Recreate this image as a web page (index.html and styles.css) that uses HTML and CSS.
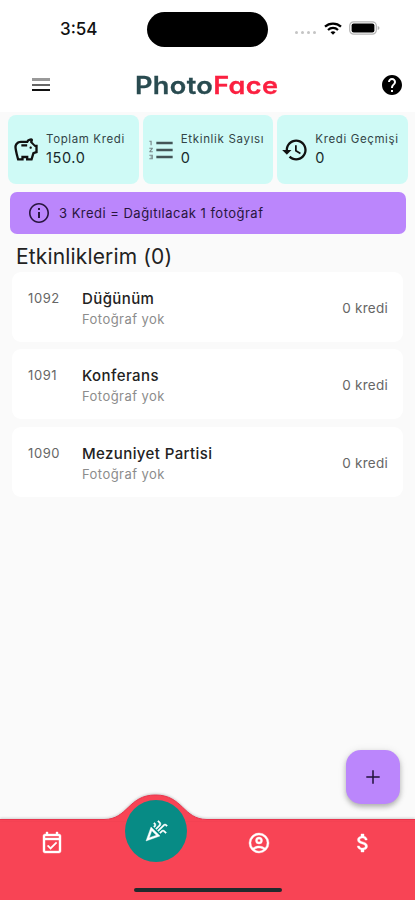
FILE: index.html
```html
<!DOCTYPE html>
<html lang="tr">
<head>
<meta charset="utf-8">
<meta name="viewport" content="width=device-width, initial-scale=1">
<title>PhotoFace</title>
<link rel="stylesheet" href="styles.css">
</head>
<body>
<div class="screen">
  <header class="top">
    <div class="status">
      <span class="time">3:54</span>
      <span class="island"></span>
      <div class="signals">
        <span class="dots"><i></i><i></i><i></i><i></i></span>
        <svg class="wifi" width="18" height="13" viewBox="0 0 18 13" fill="none" stroke="#000" stroke-width="2.2"><path d="M1 4.6C5.4.5 12.600.5 17 4.600"/><path d="M4 8C6.900 5.200 11.100 5.200 14 8"/><path d="M9 12.700 6.500 10.200Q9 8.200 11.500 10.200Z" fill="#000" stroke="none"/></svg>
        <svg width="31" height="14" viewBox="0 0 31 14"><rect x=".7" y=".8" width="26.600" height="12.400" rx="4" fill="#fff" stroke="#b4b4b4" stroke-width="1.200"/><rect x="2.600" y="2.500" width="22.800" height="9" rx="2" fill="#000"/><path d="M28.700 5v4q1.800-.7 1.800-2t-1.800-2Z" fill="#b4b4b4"/></svg>
      </div>
    </div>
    <div class="appbar">
      <span class="menu"><i></i><i></i><i></i></span>
      <h1 class="logo">Photo<b>Face</b></h1>
      <svg class="help" viewBox="2 2 20 20"><path d="M12 2C6.480 2 2 6.480 2 12s4.480 10 10 10 10-4.480 10-10S17.520 2 12 2zm1 17h-2v-2h2v2zm2.070-7.750-.9.920C13.450 12.900 13 13.500 13 15h-2v-.5c0-1.100.45-2.100 1.170-2.830l1.240-1.260c.37-.36.590-.86.590-1.410 0-1.100-.9-2-2-2s-2 .9-2 2H8c0-2.210 1.790-4 4-4s4 1.790 4 4c0 .88-.36 1.680-.93 2.250z"/></svg>
    </div>
  </header>

  <section class="stats">
    <div class="stat">
      <svg class="ic" viewBox="0 0 24 24"><path d="M15 10c0-.55.45-1 1-1s1 .45 1 1-.45 1-1 1-1-.45-1-1zM8 9h5V7H8v2zm14-1.500v6.970l-2.820.94L17.500 21H12v-2h-2v2H4.500S2 12.540 2 9.500C2 6.460 4.460 4 7.500 4h5c.91-1.210 2.360-2 4-2 .83 0 1.500.67 1.500 1.500 0 .21-.04.41-.12.590-.14.340-.26.730-.32 1.150l2.270 2.260H22zm-2 2h-.5L15.500 5.500c0-.46.060-.92.170-1.370C14.770 4.460 14.010 5.150 13.700 6H7.500C5.570 6 4 7.570 4 9.500c0 1.880 1.220 6.650 2.010 9.500H8v-2h6v2h2.010l1.550-5.150L20 13.030V9.500z"/></svg>
      <div><p class="label l1">Toplam Kredi</p><p class="value">150.0</p></div>
    </div>
    <div class="stat">
      <svg class="ic soft" viewBox="0 0 24 24"><path d="M8 5h14v2H8zM8 11h14v2H8zM8 17h14v2H8z"/><path class="num" d="M2 4h2v4H3V5H2zM2 10h3v.9L3.200 13H5v1H2v-.9L3.800 11H2zM2 16h3v4H2v-1h2v-.5H3v-1h1V17H2z"/></svg>
      <div><p class="label">Etkinlik Sayısı</p><p class="value">0</p></div>
    </div>
    <div class="stat">
      <svg class="ic" viewBox="0 0 24 24"><path d="M13 3c-4.970 0-9 4.030-9 9H1l3.890 3.890.07.14L9 12H6c0-3.870 3.130-7 7-7s7 3.130 7 7-3.130 7-7 7c-1.930 0-3.680-.79-4.940-2.060l-1.420 1.420C8.270 19.990 10.510 21 13 21c4.970 0 9-4.030 9-9s-4.030-9-9-9zm-1 5v5l4.280 2.540.72-1.210-3.500-2.080V8H12z"/></svg>
      <div><p class="label l1">Kredi Geçmişi</p><p class="value">0</p></div>
    </div>
  </section>

  <div class="notice">
    <svg viewBox="2 2 20 20"><path d="M11 7h2v2h-2zm0 4h2v6h-2zm1-9C6.480 2 2 6.480 2 12s4.480 10 10 10 10-4.480 10-10S17.520 2 12 2zm0 18.400c-4.630 0-8.400-3.770-8.400-8.400S7.370 3.600 12 3.600s8.400 3.770 8.400 8.400-3.770 8.400-8.400 8.400z"/></svg>
    <span>3 Kredi = Dağıtılacak 1 fotoğraf</span>
  </div>

  <h2 class="heading">Etkinliklerim (0)</h2>
  <ul class="events">
    <li><span class="id">1092</span><div class="info"><p class="name">Düğünüm</p><p class="sub">Fotoğraf yok</p></div><span class="credit">0 kredi</span></li>
    <li><span class="id">1091</span><div class="info"><p class="name">Konferans</p><p class="sub">Fotoğraf yok</p></div><span class="credit">0 kredi</span></li>
    <li><span class="id">1090</span><div class="info"><p class="name">Mezuniyet Partisi</p><p class="sub">Fotoğraf yok</p></div><span class="credit">0 kredi</span></li>
  </ul>

  <button class="fab" aria-label="Ekle"><svg width="14" height="14" viewBox="0 0 14 14" stroke="#21113a" stroke-width="1.500"><path d="M7 .3v13.400M.3 7h13.400"/></svg></button>

  <nav class="nav">
    <svg class="hump" width="415" height="28" viewBox="0 0 415 28"><path d="M0 26.500H104C128 26.500 128 2 155.500 2S183 26.500 207 26.500H415V28H0Z" fill="#f84455"/><path d="M0 26.500H104C128 26.500 128 2 155.500 2S183 26.500 207 26.500H415" fill="none" stroke="#e8334c" stroke-width="1"/></svg>
    <div class="tabs">
      <a class="tab"><svg width="24" height="24" viewBox="0 0 24 24"><path d="M19 3h-1V1h-2v2H8V1H6v2H5c-1.110 0-2 .9-2 2v15c0 1.100.89 2 2 2h14c1.100 0 2-.9 2-2V5c0-1.100-.9-2-2-2zm0 17H5V9h14v11zM5 7V5h14v2H5zm5.560 11.500 6.500-6.500-1.100-1.100-5.400 5.400-2.300-2.300-1.100 1.100z"/></svg></a>
      <a class="tab active"><span class="bubble"><svg width="24" height="24" viewBox="0 0 24 24"><path fill-rule="evenodd" d="m2 22 14-5L7 8 2 22zm3.300-3.300 2.520-7.050 4.530 4.530-7.050 2.520zM14.530 12.530l5.590-5.590c.49-.49 1.280-.49 1.770 0l.59.590 1.060-1.060-.59-.59c-1.070-1.070-2.820-1.070-3.890 0l-5.590 5.590 1.060 1.060zM10.060 6.880l-.59.590 1.060 1.060.59-.59c1.070-1.070 1.070-2.820 0-3.890l-.59-.59-1.060 1.070.59.590c.48.48.48 1.280 0 1.760zM17.060 11.880l-1.590 1.590 1.060 1.060 1.590-1.590c.49-.49 1.280-.49 1.770 0l1.610 1.610 1.060-1.060-1.610-1.610c-1.080-1.070-2.820-1.070-3.890 0zM15.060 5.880l-3.590 3.590 1.060 1.060 3.590-3.590c1.070-1.070 1.070-2.820 0-3.890l-1.590-1.590-1.060 1.060 1.590 1.590c.48.490.48 1.290 0 1.770z"/></svg></span></a>
      <a class="tab"><svg width="24" height="24" viewBox="0 0 24 24" fill-rule="evenodd"><path d="M12 2a10 10 0 1 0 0 20 10 10 0 0 0 0-20zM7.350 18.500C8.660 17.560 10.260 17 12 17s3.340.56 4.650 1.500a8 8 0 0 1-9.300 0zm10.790-1.380A9.950 9.950 0 0 0 12 15c-2.320 0-4.450.8-6.140 2.120a8 8 0 1 1 12.280 0z"/><path d="M12 6a3.500 3.500 0 1 0 0 7 3.500 3.500 0 0 0 0-7zm0 5a1.500 1.500 0 1 1 0-3 1.500 1.500 0 0 1 0 3z"/></svg></a>
      <a class="tab"><svg width="24" height="24" viewBox="0 0 24 24"><path d="M11.800 10.900c-2.270-.59-3-1.200-3-2.150 0-1.090 1.010-1.850 2.700-1.850 1.780 0 2.440.85 2.500 2.100h2.210c-.07-1.720-1.120-3.300-3.210-3.810V3h-3v2.160c-1.940.42-3.500 1.680-3.500 3.610 0 2.310 1.910 3.460 4.700 4.130 2.500.6 3 1.480 3 2.410 0 .69-.49 1.790-2.700 1.790-2.060 0-2.870-.92-2.980-2.100h-2.200c.12 2.190 1.760 3.420 3.680 3.830V21h3v-2.150c1.950-.37 3.500-1.500 3.500-3.550 0-2.840-2.430-3.810-4.700-4.400z"/></svg></a>
    </div>
    <span class="home"></span>
  </nav>
</div>
</body>
</html>
```
FILE: styles.css
```css
* { box-sizing: border-box; margin: 0; padding: 0; }
body { font-family: Inter, "Liberation Sans", sans-serif; background: #fafafa; color: #222; }
.screen { width: 415px; height: 900px; display: flex; flex-direction: column; position: relative; overflow: hidden; background: #fafafa; }
.top { height: 112px; background: #fff; flex: none; }
.status { height: 57px; display: grid; grid-template-columns: 147px 121px 1fr; align-items: center; }
.time { padding-left: 60px; font-size: 17px; font-weight: 500; letter-spacing: 0; color: #111; white-space: nowrap; }
.island { height: 35px; margin-top: 1px; border-radius: 18px; background: #000; }
.signals { display: flex; align-items: center; padding-left: 27px; margin-top: -1px; }
.dots { display: flex; gap: 3px; margin: 9px 8px 0 0; }
.dots i { width: 3px; height: 3px; border-radius: 50%; background: #c4c4c4; }
.wifi { margin-right: 7px; }
.appbar { height: 55px; display: flex; align-items: center; padding: 0 13px 0 32px; }
.menu { display: flex; flex-direction: column; gap: 3px; width: 18px; margin-top: -1px; }
.menu i { height: 2px; background: #111; }
.menu i:nth-child(1) { background: #999; height: 3px; }
.menu i:nth-child(2) { background: #666; }
.logo { margin: 3px 0 0 85px; white-space: nowrap; font-size: 24px; line-height: 30px; font-weight: 600; letter-spacing: .3px; color: #294b50; transform: scaleX(1.130); transform-origin: 0 50%; font-feature-settings: "cv11"; -webkit-text-stroke: .3px; }
.logo b { color: #fb2040; font-weight: 600; }
.help { width: 20px; height: 20px; margin-left: auto; }

.stats { display: grid; grid-template-columns: repeat(3, 1fr); gap: 4px; padding: 0 7px 0 8px; margin-top: 3px; height: 69px; flex: none; }
.stat { background: #cffaf6; border-radius: 8px; display: flex; align-items: center; gap: 6px; padding: 0 0 0 4px; white-space: nowrap; }
.ic { width: 28px; height: 28px; flex: none; fill: #111; }
.soft { fill: #445557; }
.num { fill: #78888a; }
.label { font-size: 11.5px; line-height: 16px; letter-spacing: .68px; color: #334446; }
.l1 { letter-spacing: .62px; }
.value { font-size: 14.500px; line-height: 20px; letter-spacing: .6px; color: #182a2c; margin-top: 1px; }

.notice { margin: 8px 9px 0 10px; height: 42px; flex: none; border-radius: 7px; background: #bb86fc; display: flex; align-items: center; padding-left: 19px; gap: 10px; color: #28153e; font-size: 13px; letter-spacing: .48px; }
.notice svg { width: 20px; height: 20px; fill: #28153e; }
.heading { margin: 8px 0 0 16px; height: 30px; flex: none; font-size: 21px; line-height: 30px; font-weight: 400; letter-spacing: .15px; color: #222; }
.events { list-style: none; display: grid; gap: 7.300px; padding: 0 12px; }
.events li { height: 70px; background: #fff; border-radius: 9px; display: flex; padding: 0 15px 0 16px; }
.id { width: 54px; padding-top: 17px; font-size: 13px; line-height: 18px; letter-spacing: .6px; color: #666; }
.info { flex: 1; padding-top: 16px; }
.name { font-size: 15px; line-height: 22px; font-weight: 500; letter-spacing: .4px; color: #222; }
.sub { font-size: 13px; line-height: 19px; letter-spacing: .45px; color: #8c8c8c; }
.credit { align-self: center; padding-top: 2px; font-size: 13.500px; letter-spacing: .25px; color: #666; }

.fab { position: absolute; right: 15px; top: 750px; width: 54px; height: 54px; border: 0; border-radius: 15px; background: #bb86fc; display: grid; place-items: center; box-shadow: 0 3px 5px rgba(0,0,0,.24), 0 1px 8px rgba(0,0,0,.1); }
.nav { margin-top: auto; height: 107px; display: flex; flex-direction: column; flex: none; background: linear-gradient(transparent 28px, #f84455 28px); }
.hump { display: block; flex: none; filter: drop-shadow(0 -1px 1px rgba(0,0,0,.18)); }
.tabs { height: 67px; flex: none; display: grid; grid-template-columns: repeat(4, 1fr); justify-items: center; }
.tab { margin-top: 10px; }
.tab svg { fill: #fff; stroke: #fff; stroke-width: .4px; display: block; }
.active { margin-top: -21px; position: relative; }
.bubble { width: 62px; height: 62px; border-radius: 50%; background: #078b85; display: grid; place-items: center; }
.home { width: 148px; height: 4px; border-radius: 2px; background: #202a2c; align-self: center; }
```
